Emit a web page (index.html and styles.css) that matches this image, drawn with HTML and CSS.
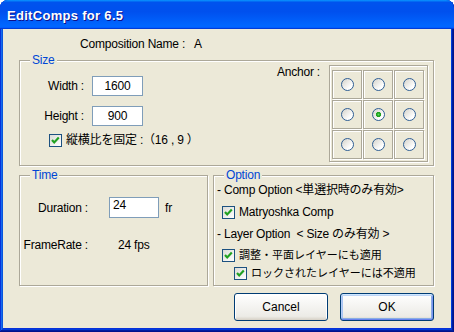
FILE: index.html
```html
<!DOCTYPE html>
<html lang="ja">
<head>
    <meta charset="UTF-8">
    <meta name="viewport" content="width=device-width, initial-scale=1.0">
    <title>EditComps for 6.5</title>
    <link rel="stylesheet" href="styles.css">
</head>
<body>
    <div class="window">
        <div class="titlebar">
            <span class="title">EditComps for 6.5</span>
        </div>

        <div class="client">
            <div class="comp-name">Composition Name :<span class="comp-value">A</span></div>

            <!-- Size -->
            <div class="group size-group">
                <span class="group-title">Size</span>
                <div class="size-body">
                    <div class="size-fields">
                        <div class="field-row">
                            <span class="field-label">Width :</span>
                            <span class="edit center">1600</span>
                        </div>
                        <div class="field-row">
                            <span class="field-label">Height :</span>
                            <span class="edit center">900</span>
                        </div>
                        <div class="check aspect">
                            <span class="checkbox"><svg width="11" height="11" viewBox="0 0 11 11"><path d="M2 5 L4.2 7.4 L8.8 2.6" fill="none" stroke="#21a121" stroke-width="2.2"/></svg></span>
                            <span>縦横比を固定 :（16 , 9 ）</span>
                        </div>
                    </div>
                    <span class="anchor-label">Anchor :</span>
                    <div class="anchor-box">
                        <div class="anchor-grid">
                            <div class="cell"><span class="radio"></span></div>
                            <div class="cell"><span class="radio"></span></div>
                            <div class="cell"><span class="radio"></span></div>
                            <div class="cell"><span class="radio"></span></div>
                            <div class="cell"><span class="radio checked"></span></div>
                            <div class="cell"><span class="radio"></span></div>
                            <div class="cell"><span class="radio"></span></div>
                            <div class="cell"><span class="radio"></span></div>
                            <div class="cell"><span class="radio"></span></div>
                        </div>
                    </div>
                </div>
            </div>

            <div class="lower">
                <!-- Time -->
                <div class="group time-group">
                    <span class="group-title">Time</span>
                    <div class="time-body">
                        <span class="time-label">Duration :</span>
                        <div class="time-value">
                            <span class="edit duration">24</span>
                            <span class="unit">fr</span>
                        </div>
                        <span class="time-label">FrameRate :</span>
                        <span class="fps">24 fps</span>
                    </div>
                </div>

                <!-- Option -->
                <div class="group option-group">
                    <span class="group-title">Option</span>
                    <div class="option-body">
                        <div class="opt-line">- Comp Option &lt;単選択時のみ有効&gt;</div>
                        <div class="check opt-check1">
                            <span class="checkbox"><svg width="11" height="11" viewBox="0 0 11 11"><path d="M2 5 L4.2 7.4 L8.8 2.6" fill="none" stroke="#21a121" stroke-width="2.2"/></svg></span>
                            <span>Matryoshka Comp</span>
                        </div>
                        <div class="opt-line opt-line2">- Layer Option &nbsp;&lt; Size のみ有効 &gt;</div>
                        <div class="check opt-check2">
                            <span class="checkbox"><svg width="11" height="11" viewBox="0 0 11 11"><path d="M2 5 L4.2 7.4 L8.8 2.6" fill="none" stroke="#21a121" stroke-width="2.2"/></svg></span>
                            <span class="jp-small">調整・平面レイヤーにも適用</span>
                        </div>
                        <div class="check opt-check3">
                            <span class="checkbox"><svg width="11" height="11" viewBox="0 0 11 11"><path d="M2 5 L4.2 7.4 L8.8 2.6" fill="none" stroke="#21a121" stroke-width="2.2"/></svg></span>
                            <span class="jp-small">ロックされたレイヤーには不適用</span>
                        </div>
                    </div>
                </div>
            </div>

            <div class="buttons">
                <button class="btn">Cancel</button>
                <button class="btn default">OK</button>
            </div>
        </div>
    </div>
</body>
</html>
```

FILE: styles.css
```css
* {
    box-sizing: border-box;
}

body {
    margin: 0;
    padding: 0;
    background-color: #fff;
    font-family: "Liberation Sans", "Noto Sans CJK JP", sans-serif;
    font-size: 12px;
    letter-spacing: -0.2px;
    color: #000;
}

.window {
    width: 454px;
    height: 332px;
    padding: 0 3px 4px;
    background-color: #0831d9;
    border-radius: 8px 8px 0 0;
    box-shadow: inset -1px -1px #00138c, inset 1px 1px #0831d9,
        inset -2px -2px #001ea0, inset 2px 2px #166aee,
        inset -3px -3px #003bda, inset 3px 3px #0855dd;
    display: flex;
    flex-direction: column;
}

.titlebar {
    height: 29px;
    margin: 0 -3px;
    padding-left: 7px;
    display: flex;
    align-items: center;
    border-radius: 8px 8px 0 0;
    background: linear-gradient(180deg, #0997ff, #0053ee 8%, #0050ee 40%, #06f 88%, #06f 93%, #005bff 95%, #003dd7 96%, #003dd7);
}

.title {
    color: #fff;
    font-weight: bold;
    font-size: 13px;
    letter-spacing: 0.3px;
    text-shadow: 1px 1px #0f1089;
    margin-top: 2px;
}

.client {
    flex: 1;
    background-color: #ece9d8;
    padding-top: 8px;
}

.comp-name {
    line-height: 14px;
    padding-left: 77px;
}

.comp-value {
    margin-left: 9px;
}

/* group boxes */
.group {
    border: 1px solid #aca899;
    box-shadow: inset 1px 1px 0 #fff, 1px 1px 0 #fff;
}

.group-title {
    display: table;
    margin: -8px 0 -6px 10px;
    padding: 0 2px;
    line-height: 14px;
    color: #0046d5;
    background-color: #ece9d8;
}

.size-group {
    width: 415px;
    margin: 9px 0 0 16px;
}

.size-body {
    display: flex;
    align-items: flex-start;
    padding: 4px 5px 3px 0;
}

.size-fields {
    flex: 1;
    padding-top: 11px;
}

.field-row {
    display: flex;
    align-items: center;
    margin-bottom: 10px;
}

.field-label {
    width: 64px;
    text-align: right;
    margin-right: 8px;
}

.edit {
    display: block;
    height: 20px;
    line-height: 18px;
    background-color: #fff;
    border: 1px solid #7f9db9;
}

.center {
    width: 51px;
    text-align: center;
}

.check {
    display: flex;
    align-items: center;
    line-height: 14px;
}

.checkbox {
    width: 13px;
    height: 13px;
    margin-right: 4px;
    border: 1px solid #1c5180;
    background: linear-gradient(135deg, #dcdcd7, #fff);
    display: flex;
    flex: none;
}

.jp-small {
    font-size: 11px;
    letter-spacing: 0;
}

.aspect {
    margin: -3px 0 0 29px;
}

.anchor-label {
    line-height: 14px;
    margin-right: 9px;
}

.anchor-box {
    width: 99px;
    padding: 4px 3px 2px 2px;
    border: 1px solid #aca899;
    box-shadow: inset 1px 1px 0 #fff, 1px 1px 0 #fff;
}

.anchor-grid {
    display: grid;
    grid-template-columns: repeat(3, 30px);
    grid-template-rows: repeat(3, 29px);
    gap: 1px;
}

.cell {
    border: 1px solid #aca899;
    box-shadow: inset 1px 1px 0 #fff, 1px 1px 0 #fff;
    display: flex;
    align-items: center;
    justify-content: center;
}

.radio {
    width: 13px;
    height: 13px;
    border-radius: 50%;
    border: 1px solid #2f5e95;
    background: linear-gradient(135deg, #d4d2ca, #fff 75%);
}

.radio.checked {
    background: radial-gradient(circle, #5ee05e 0, #21a121 1.6px, #21a121 2.4px, transparent 2.9px),
        linear-gradient(135deg, #d4d2ca, #fff 75%);
}

/* lower row */
.lower {
    display: flex;
    gap: 5px;
    margin: 9px 0 0 16px;
}

.time-group {
    width: 189px;
    height: 111px;
}

.time-body {
    display: grid;
    grid-template-columns: 68px auto;
    column-gap: 21px;
    row-gap: 20px;
    align-items: center;
    padding-top: 21px;
}

.time-label {
    text-align: right;
    line-height: 14px;
}

.time-value {
    display: flex;
    align-items: center;
}

.duration {
    width: 50px;
    height: 21px;
    line-height: 15px;
    padding-left: 3px;
}

.unit {
    margin-left: 6px;
}

.fps {
    padding-left: 9px;
    line-height: 14px;
}

.option-group {
    width: 221px;
    height: 111px;
}

.option-body {
    padding: 7px 0 0 3px;
}

.opt-line {
    line-height: 14px;
}

.opt-check1 {
    margin: 8px 0 0 5px;
}

.opt-line2 {
    margin-top: 8px;
}

.opt-check2 {
    margin: 7px 0 0 5px;
}

.opt-check3 {
    margin: 4px 0 0 17px;
}

/* buttons */
.buttons {
    display: flex;
    justify-content: flex-end;
    gap: 12px;
    margin: 7px 17px 0 0;
}

.btn {
    width: 94px;
    height: 28px;
    padding: 0;
    font-family: "Liberation Sans", sans-serif;
    font-size: 12px;
    color: #000;
    border: 1px solid #003c74;
    border-radius: 3px;
    background: linear-gradient(180deg, #fff, #ecebe6 86%, #d6d0c5);
    box-shadow: inset -1px 1px #fff, inset 1px 2px #fff;
}

.btn.default {
    box-shadow: inset 0 1px #cee7ff, inset 0 -1px #6982ee, inset 1px 0 #b4ccf5, inset -1px 0 #7b94f2,
        inset 0 2px #bcd4f6, inset 0 -2px #89ade4, inset 2px 0 #a9c4f2, inset -2px 0 #89ade4;
}
```
